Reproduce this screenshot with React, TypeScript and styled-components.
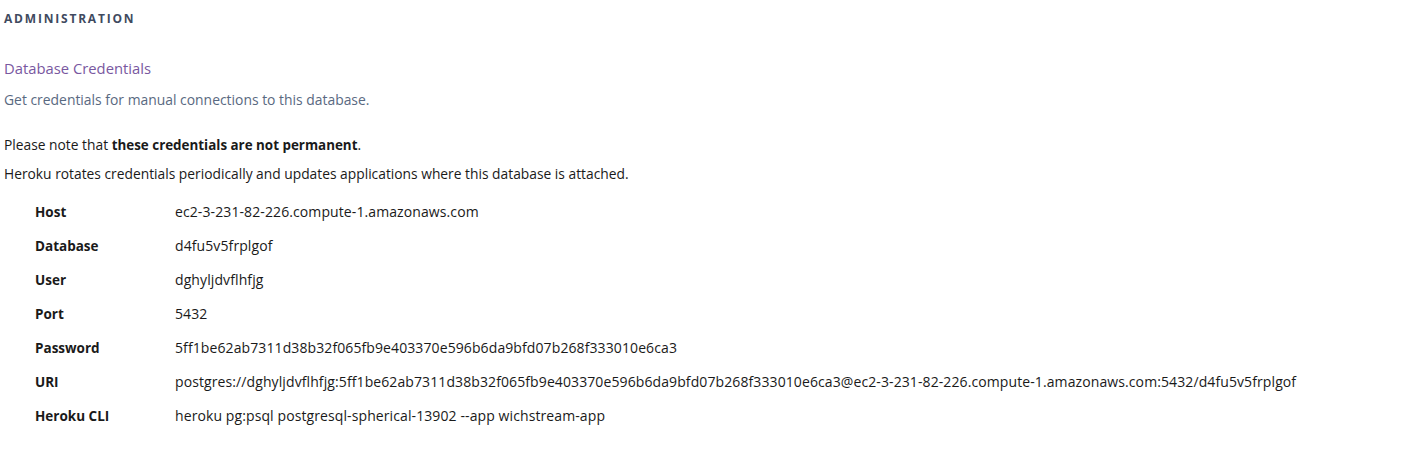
import React from "react";
import styled, { createGlobalStyle } from "styled-components";

const Global = createGlobalStyle`
  body {
    margin: 0;
    background: #ffffff;
    font-family: "Open Sans", "Noto Sans", sans-serif;
    color: #1a1a1a;
  }
`;

const Page = styled.div`
  padding: 11px 4px 20px 4px;
`;

const SectionHeader = styled.h2`
  margin: 0;
  font-size: 12px;
  font-weight: 700;
  letter-spacing: 1.8px;
  text-transform: uppercase;
  color: #3f4a60;
  line-height: 16px;
`;

const Title = styled.h3`
  margin: 31px 0 0 0;
  font-size: 14.8px;
  font-weight: 400;
  color: #79589f;
  line-height: 20px;
`;

const Description = styled.p`
  margin: 13px 0 0 0;
  font-size: 13.9px;
  color: #596981;
  line-height: 18px;
`;

const Note = styled.p<{ $first?: boolean }>`
  margin: ${(p) => (p.$first ? "27px" : "11px")} 0 0 0;
  font-size: 13.8px;
  color: #1a1a1a;
  line-height: 18px;
  strong {
    font-weight: 700;
    font-size: 13.4px;
  }
`;

const CredTable = styled.dl`
  margin: 20px 0 0 31px;
  display: grid;
  grid-template-columns: 140px auto;
  row-gap: 16px;
  align-items: baseline;
`;

const Label = styled.dt`
  margin: 0;
  font-size: 13.5px;
  font-weight: 700;
  color: #1a1a1a;
  line-height: 18px;
`;

const Value = styled.dd`
  margin: 0;
  font-size: 14px;
  letter-spacing: 0.1px;
  color: #1a1a1a;
  line-height: 18px;
  white-space: nowrap;
`;

const creds: [string, string][] = [
  ["Host", "ec2-3-231-82-226.compute-1.amazonaws.com"],
  ["Database", "d4fu5v5frplgof"],
  ["User", "dghyljdvflhfjg"],
  ["Port", "5432"],
  ["Password", "5ff1be62ab7311d38b32f065fb9e403370e596b6da9bfd07b268f333010e6ca3"],
  [
    "URI",
    "postgres://dghyljdvflhfjg:5ff1be62ab7311d38b32f065fb9e403370e596b6da9bfd07b268f333010e6ca3@ec2-3-231-82-226.compute-1.amazonaws.com:5432/d4fu5v5frplgof",
  ],
  ["Heroku CLI", "heroku pg:psql postgresql-spherical-13902 --app wichstream-app"],
];

export default function App() {
  return (
    <>
      <Global />
      <Page>
        <SectionHeader>Administration</SectionHeader>
        <Title>Database Credentials</Title>
        <Description>Get credentials for manual connections to this database.</Description>
        <Note $first>
          Please note that <strong>these credentials are not permanent</strong>.
        </Note>
        <Note>
          Heroku rotates credentials periodically and updates applications where this database is attached.
        </Note>
        <CredTable>
          {creds.map(([k, v]) => (
            <React.Fragment key={k}>
              <Label>{k}</Label>
              <Value>{v}</Value>
            </React.Fragment>
          ))}
        </CredTable>
      </Page>
    </>
  );
}
